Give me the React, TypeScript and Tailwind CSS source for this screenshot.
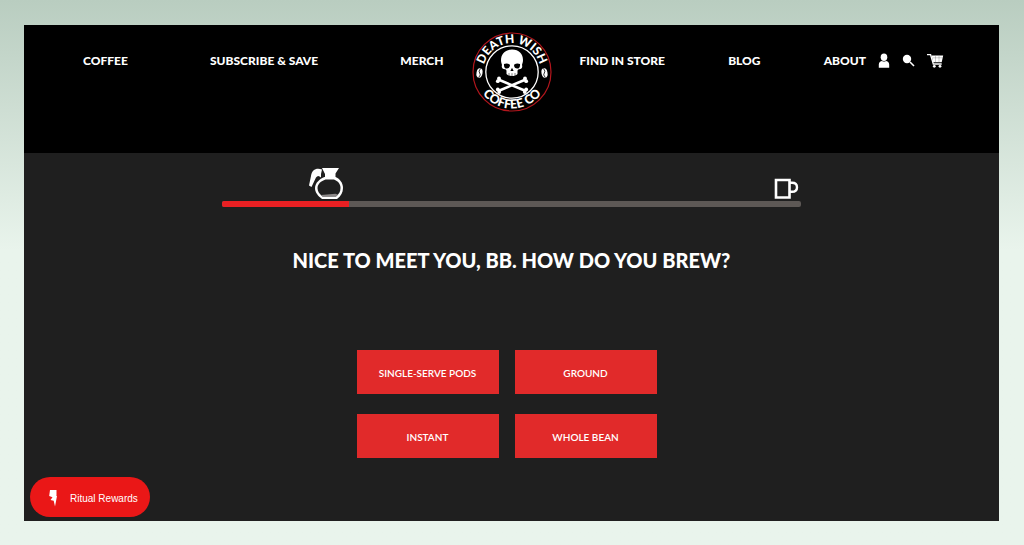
import { clsx } from 'clsx'

const leftLinks = ['Coffee', 'Subscribe & Save', 'Merch']
const rightLinks = ['Find in Store', 'Blog', 'About']
const brewOptions = ['Single-Serve Pods', 'Ground', 'Instant', 'Whole Bean']

const NavLink = ({ label, className }: { label: string; className?: string }) => (
  <a href="#" className={clsx('whitespace-nowrap uppercase hover:text-gray-300', className)}>
    {label}
  </a>
)

const Logo = () => (
  <svg viewBox="0 0 80 80" className="size-20" role="img" aria-label="Death Wish Coffee Co.">
    <defs>
      <path id="logo-top" d="M11.200 40a28.800 28.800 0 0 1 57.600 0" />
      <path id="logo-bottom" d="M3.500 40a36.500 36.500 0 0 0 73 0" />
    </defs>
    <circle cx="40" cy="40" r="39" fill="#000" stroke="#b3161d" strokeWidth="1.2" />
    <circle cx="40" cy="40" r="26.2" fill="none" stroke="#fff" strokeWidth="1.3" />
    <g fill="#fff" fontFamily="Lato, sans-serif" fontWeight="900" textAnchor="middle">
      <text fontSize="12">
        <textPath href="#logo-top" startOffset="50%">DEATH WISH</textPath>
      </text>
      <text fontSize="12.5">
        <textPath href="#logo-bottom" startOffset="50%">COFFEE CO</textPath>
      </text>
    </g>
    <g fill="#fff">
      <ellipse cx="7.5" cy="41" rx="3" ry="4.7" transform="rotate(10 7.5 41)" />
      <ellipse cx="72.5" cy="41" rx="3" ry="4.7" transform="rotate(-10 72.5 41)" />
    </g>
    <path d="M8.5 36.5q-2.5 3 -.8 4.5t-1 4.5M71.5 36.5q2.5 3 .8 4.5t1 4.5" fill="none" stroke="#000" strokeWidth=".8" />
    <g stroke="#fff" strokeWidth="2.6" strokeLinecap="round">
      <path d="M27.500 48l25 10.500M52.500 48l-25 10.500" />
    </g>
    <g fill="#fff">
      <circle cx="27" cy="46.500" r="1.900" />
      <circle cx="25.800" cy="49.200" r="1.900" />
      <circle cx="53" cy="46.500" r="1.900" />
      <circle cx="54.200" cy="49.200" r="1.900" />
      <circle cx="25.800" cy="57.500" r="1.900" />
      <circle cx="27.200" cy="60" r="1.900" />
      <circle cx="54.200" cy="57.500" r="1.900" />
      <circle cx="52.800" cy="60" r="1.900" />
    </g>
    <path
      d="M40 17.500c-7 0-11 4.500-11 10.500 0 2 .6 3.500 1 5-.8 2.500.3 4 3 4.300 1.200.2 1.500.8 1.500 2V42c1.500 1.500 3.500 2 5.500 2s4-.5 5.500-2v-2.700c0-1.200.3-1.800 1.500-2 2.700-.3 3.800-1.800 3-4.300.4-1.500 1-3 1-5 0-6-4-10.500-11-10.500z"
      fill="#fff"
    />
    <path
      d="M32 32q3-1.300 6 .7c0 2.700-1.500 3.800-3.300 3.800S31.700 35 32 32zM48 32q-3-1.300-6 .7c0 2.700 1.500 3.800 3.300 3.800S48.300 35 48 32zM40 35.800l-1.600 3.200h3.200z"
      fill="#000"
    />
    <path d="M37 41v2.500M40 41.200v2.800M43 41v2.500" stroke="#000" strokeWidth=".5" />
  </svg>
)

const UserIcon = () => (
  <svg viewBox="0 0 12 16" className="h-4 w-3" fill="currentColor" aria-hidden="true">
    <ellipse cx="6" cy="4.200" rx="3.300" ry="3.700" />
    <path d="M.8 14.800v-3.300C.8 9 2.500 8.200 4 8q2 1.200 4 0c1.500.2 3.200 1 3.200 3.500v3.300z" />
  </svg>
)

const SearchIcon = () => (
  <svg viewBox="0 0 13 16" className="h-4 w-[13px]" fill="currentColor" aria-hidden="true">
    <circle cx="5" cy="6" r="4.200" />
    <path d="M8 9l4 4" stroke="currentColor" strokeWidth="1.600" />
  </svg>
)

const CartIcon = () => (
  <svg viewBox="0 0 17 16" className="h-4 w-[17px]" fill="currentColor" aria-hidden="true">
    <path d="M4.500 2.500h11.700l-1.500 6.700H6.200z" />
    <path d="M0 1.700h3.600l2.700 9.300h8.400" fill="none" stroke="currentColor" strokeWidth="1.300" />
    <path d="M5.500 4.800h10M8.500 3v6M12 3v6" stroke="#000" strokeWidth=".2" />
    <circle cx="7.300" cy="13.300" r="1.400" />
    <circle cx="13" cy="13.300" r="1.400" />
  </svg>
)

const CoffeePot = () => (
  <svg viewBox="0 0 36 33" className="h-[33px] w-9" aria-hidden="true">
    <path d="M14 1h17l-3.500 5.500V11H17V7z" fill="#fff" />
    <path d="M14 2.500C8 .5 4 3 3 9L1 18.500l2.500 1.500L8 10.500q2-3 5 0V7z" fill="#fff" />
    <path
      d="M16.500 10c-5 2-9.500 6-9.500 11 0 4.500 3 8 7 11h15c4-3 6-6.500 6-11 0-5-3-9-7.500-11z"
      fill="#fff"
    />
    <path
      d="M17.500 12.500c-4.500 1.500-8 4.500-8 8.500 0 3.500 2 6 5 8.500h13.500c3-2.500 4.500-5 4.500-8.500 0-4-2.500-7-6.500-8.500z"
      fill="#1f1f1f"
    />
    <path d="M13 28l14.500-1.300 2.500 1-2 1.800H14.500z" fill="#8b8787" />
  </svg>
)

const Mug = () => (
  <svg viewBox="0 0 27 22" className="h-[22px] w-[27px]" fill="none" stroke="#fff" aria-hidden="true">
    <path d="M2 2h13.500v17.500H2z" strokeWidth="2.600" />
    <path d="M16 4.800h2c3.500 0 5 2 5 4.400s-1.500 4.600-5 4.600h-2" strokeWidth="2.400" />
  </svg>
)

const BoltIcon = () => (
  <svg viewBox="0 0 10 18" className="h-[18px] w-2.5" fill="#fff" aria-hidden="true">
    <path d="M2 1h6.500v5.500H7.800L9 7 7 17.500l-1.300-5.700L2.500 11l2-2.700L1.200 7z" />
  </svg>
)

const Header = () => (
  <header className="grid h-32 grid-cols-[1fr_auto_1fr] items-start gap-x-7 bg-black px-[55px] font-['Lato',sans-serif] text-xs font-black text-white">
    <nav aria-label="Shop" className="flex justify-between pt-7 pl-1 leading-4">
      {leftLinks.map(label => <NavLink key={label} label={label} />)}
    </nav>
    <a href="#" className="pt-[7px]">
      <Logo />
    </a>
    <div className="flex items-center gap-3 pt-7">
      <nav aria-label="More" className="flex flex-1 justify-between leading-4">
        {rightLinks.map(label => <NavLink key={label} label={label} />)}
      </nav>
      <a href="#" aria-label="Account"><UserIcon /></a>
      <a href="#" aria-label="Search"><SearchIcon /></a>
      <a href="#" aria-label="Cart"><CartIcon /></a>
    </div>
  </header>
)

const Progress = ({ value }: { value: number }) => (
  <div className="mx-auto w-full max-w-[579px]">
    <div className="flex h-[34px] items-start justify-between">
      <div className="flex justify-end" style={{ width: `${value - 1}%` }}>
        <CoffeePot />
      </div>
      <div className="pt-[11px]">
        <Mug />
      </div>
    </div>
    <div
      role="progressbar"
      aria-label="Quiz progress"
      aria-valuenow={value}
      className="h-1.5 rounded-xs bg-[#5d5855]"
    >
      <div className="h-full rounded-l-xs bg-[#e92023]" style={{ width: `${value}%` }} />
    </div>
  </div>
)

const App = () => {
  return (
    <div className="min-h-screen bg-[#e9f4ec] bg-linear-to-b from-[#b9cdc0] to-[#e9f4ec] to-[250px] px-[25px] py-6 pt-[25px] pl-6">
      <div className="relative flex min-h-[calc(100vh_-_49px)] flex-col bg-[#1f1f1f]">
        <Header />
        <main className="flex-1 px-4 pt-3.5 pb-[62px]">
          <Progress value={22} />
          <h1 className="mt-[41px] text-center font-['Lato',sans-serif] text-xl leading-6 font-black text-white uppercase">
            Nice to meet you, BB. How do you brew?
          </h1>
          <div className="mt-[78px] flex justify-center pr-2.5">
            <div className="grid grid-cols-2 gap-x-4 gap-y-5">
              {brewOptions.map(option => (
                <button
                  key={option}
                  type="button"
                  className="h-11 w-[142px] cursor-pointer bg-[#e12a2a] pt-0.5 font-['Lato',sans-serif] text-[10px] font-semibold text-white uppercase hover:bg-[#c92222]"
                >
                  {option}
                </button>
              ))}
            </div>
          </div>
        </main>
        <button
          type="button"
          className="absolute bottom-1 left-1.5 flex h-10 w-[120px] cursor-pointer items-center gap-3 rounded-full bg-[#ea1717] pt-0.5 pl-[18px] font-['Liberation_Sans',sans-serif] text-[10px] text-white"
        >
          <BoltIcon />
          <span className="whitespace-nowrap">Ritual Rewards</span>
        </button>
      </div>
    </div>
  )
}

export default App
